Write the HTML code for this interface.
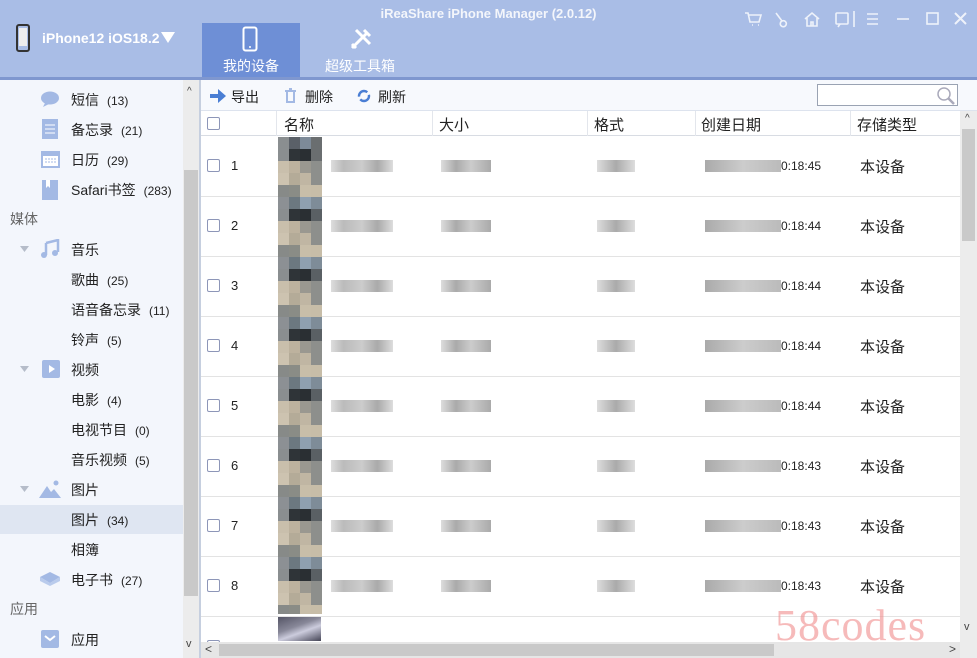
<!DOCTYPE html>
<html><head><meta charset="utf-8"><style>
*{margin:0;padding:0;box-sizing:border-box}
body{width:977px;height:658px;overflow:hidden;position:relative;background:#fff;font-family:"Liberation Sans","Noto Sans CJK SC",sans-serif;font-size:14px;color:#222}
.hdr{position:absolute;left:0;top:0;width:977px;height:78px;background:#a9bde6}
.hline{position:absolute;left:0;top:77px;width:977px;height:3px;background:#7f97cf}
.title{position:absolute;left:0;width:977px;top:6px;text-align:center;color:#f4f6fb;font-weight:bold;font-size:13px}
.dev{position:absolute;left:42px;top:30px;color:#fff;font-weight:bold;font-size:14px}
.tab{position:absolute;top:23px;width:98px;height:54px;text-align:center;color:#fff;font-size:14px}
.tab span{position:absolute;left:0;right:0;top:33px}
.sb{position:absolute;left:0;top:80px;width:183px;height:578px;background:#f3f6fc}
.it{position:absolute;font-size:14px;color:#222;white-space:nowrap}
.it small{font-size:12px;margin-left:8px}
.sec{position:absolute;left:10px;color:#666;font-size:14px}
.ico{position:absolute}
.vs{position:absolute;left:183px;top:80px;width:16px;height:578px;background:#ececec}
.vs .th{position:absolute;left:1px;top:90px;width:14px;height:426px;background:#c9c9c9}
.div{position:absolute;left:199px;top:80px;width:2px;height:578px;background:#c6cfdf}
.tb{position:absolute;left:201px;top:80px;width:776px;height:31px;background:#f7f9fd;border-bottom:1px solid #dde3ee}
.tb .b{position:absolute;top:7px;font-size:14px}
.srch{position:absolute;left:817px;top:84px;width:141px;height:22px;border:1px solid #9aa3b3;background:#fff}
.th2{position:absolute;left:201px;top:111px;width:759px;height:25px;border-bottom:1px solid #d8dce3;background:#fff}
.th2 .h{position:absolute;top:3px;font-size:15px}
.th2 i{position:absolute;top:0;width:1px;height:25px;background:#e3e6ec}
.cb{position:absolute;width:13px;height:13px;border:1.5px solid #8d96b8;border-radius:2px;background:#fff}
.row{position:absolute;left:201px;width:759px;height:60px;border-bottom:1px solid #e3e3e3}
.row .n{position:absolute;left:30px;top:21px;font-size:13px}
.row .st{position:absolute;left:659px;top:19px;font-size:15px}
.row .tm{position:absolute;left:580px;top:22px;font-size:12px}
.bl{position:absolute;height:12px}
.rs{position:absolute;left:960px;top:111px;width:17px;height:547px;background:#ececec}
.rs .th{position:absolute;left:2px;top:18px;width:13px;height:112px;background:#c9c9c9}
.hs{position:absolute;left:201px;top:642px;width:759px;height:16px;background:#e6e6e6}
.hs .th{position:absolute;left:18px;top:2px;width:555px;height:12px;background:#c9c9c9}
.thumb{position:absolute;left:278px;top:137px;width:44px;height:477px;overflow:hidden;display:grid;grid-template-columns:repeat(4,11px);grid-auto-rows:12px}
.wm{position:absolute;left:775px;top:600px;font-family:"Liberation Serif",serif;font-size:44px;color:rgba(240,140,140,.6);letter-spacing:1px}
</style></head><body>
<div class="hdr"></div><div class="hline"></div>
<div class="title">iReaShare iPhone Manager (2.0.12)</div>
<svg class="ico" style="left:16px;top:24px" width="14" height="28"><rect x="1" y="1" width="12" height="26" rx="2" fill="none" stroke="#333" stroke-width="2"/><rect x="3" y="4" width="8" height="18" fill="#eee"/></svg>
<div class="dev">iPhone12 iOS18.2</div>
<svg class="ico" style="left:161px;top:32px" width="14" height="11"><path d="M0 0H14L7 11Z" fill="#fff"/></svg>
<div class="tab" style="left:202px;background:#6e8fd6"><svg style="position:absolute;left:40px;top:3px" width="16" height="26"><rect x="1.5" y="1.5" width="13" height="23" rx="2" fill="none" stroke="#fff" stroke-width="2"/><circle cx="8" cy="21" r="1" fill="#fff"/></svg><span>我的设备</span></div>
<div class="tab" style="left:311px"><svg style="position:absolute;left:38px;top:4px" width="24" height="24" stroke="#fff" stroke-width="3" fill="none"><path d="M3 21L17 7M7 3L21 17M15 3l6 6M3 17l4 4"/></svg><span>超级工具箱</span></div>
<svg class="ico" style="left:744px;top:10px" width="230" height="18" stroke="#eef2fa" stroke-width="1.6" fill="none">
<path d="M1 3h3l2 9h9l2-7H5M8 15h1M14 15h1"/>
<path d="M32 3l6 8M38 11a3 3 0 1 0 4 4a3 3 0 0 0-4-4"/>
<path d="M61 9l7-6 7 6M63 8v8h10V8M67 16v-4h2v4"/>
<rect x="92" y="3" width="12" height="11" rx="1"/><path d="M96 14l-2 3"/><line x1="110" y1="1" x2="110" y2="17"/>
<path d="M123 4h11M123 9h11M123 14h11"/>
<path d="M153 9h12"/>
<rect x="183" y="3" width="11" height="11"/>
<path d="M211 3l11 11M222 3l-11 11" stroke-width="2"/>
</svg>
<div class="sb">
<div style="position:absolute;left:0;top:425px;width:183px;height:29px;background:#dfe6f2"></div>
</div>
<svg class="ico" style="left:40px;top:90px" width="20" height="18"><ellipse cx="10" cy="8" rx="9" ry="6.5" fill="#a3b9e4"/><path d="M5 13l-2 4 6-3z" fill="#a3b9e4"/></svg>
<svg class="ico" style="left:41px;top:118px" width="18" height="22"><rect x="1" y="1" width="16" height="20" fill="#a3b9e4"/><path d="M4 7h10M4 11h10M4 15h10" stroke="#fff"/></svg>
<svg class="ico" style="left:40px;top:149px" width="21" height="20"><rect x="1" y="2" width="19" height="17" fill="#a3b9e4"/><rect x="3" y="7" width="15" height="10" fill="#fff"/><path d="M5 10h11M5 13h11" stroke="#a3b9e4" stroke-dasharray="2 1"/></svg>
<svg class="ico" style="left:41px;top:179px" width="18" height="22"><rect x="1" y="1" width="16" height="20" fill="#a3b9e4"/><path d="M5 1v8l2-2 2 2V1" fill="#fff"/></svg>
<div class="it" style="left:71px;top:90px">短信<small>(13)</small></div>
<div class="it" style="left:71px;top:120px">备忘录<small>(21)</small></div>
<div class="it" style="left:71px;top:150px">日历<small>(29)</small></div>
<div class="it" style="left:71px;top:180px">Safari书签<small>(283)</small></div>
<div class="sec" style="top:209px">媒体</div>
<svg class="ico" style="left:20px;top:246px" width="9" height="6"><path d="M0 0h9L4.5 6z" fill="#b5bcc9"/></svg>
<svg class="ico" style="left:40px;top:239px" width="20" height="20"><path d="M6 4l12-3v12M6 4v12" stroke="#a3b9e4" stroke-width="2.5" fill="none"/><circle cx="4" cy="16" r="3" fill="#a3b9e4"/><circle cx="15" cy="14" r="3" fill="#a3b9e4"/></svg>
<div class="it" style="left:71px;top:240px">音乐</div>
<div class="it" style="left:71px;top:270px">歌曲<small>(25)</small></div>
<div class="it" style="left:71px;top:300px">语音备忘录<small>(11)</small></div>
<div class="it" style="left:71px;top:330px">铃声<small>(5)</small></div>
<svg class="ico" style="left:20px;top:366px" width="9" height="6"><path d="M0 0h9L4.5 6z" fill="#b5bcc9"/></svg>
<svg class="ico" style="left:42px;top:360px" width="18" height="18"><rect width="18" height="18" rx="2" fill="#a3b9e4"/><path d="M7 5l6 4-6 4z" fill="#fff"/></svg>
<div class="it" style="left:71px;top:360px">视频</div>
<div class="it" style="left:71px;top:390px">电影<small>(4)</small></div>
<div class="it" style="left:71px;top:420px">电视节目<small>(0)</small></div>
<div class="it" style="left:71px;top:450px">音乐视频<small>(5)</small></div>
<svg class="ico" style="left:20px;top:486px" width="9" height="6"><path d="M0 0h9L4.5 6z" fill="#b5bcc9"/></svg>
<svg class="ico" style="left:39px;top:480px" width="22" height="18"><path d="M0 18L8 6l4 6 3-3 7 9z" fill="#a3b9e4"/><circle cx="17" cy="3" r="2.5" fill="#a3b9e4"/></svg>
<div class="it" style="left:71px;top:480px">图片</div>
<div class="it" style="left:71px;top:510px">图片<small>(34)</small></div>
<div class="it" style="left:71px;top:540px">相簿</div>
<svg class="ico" style="left:39px;top:571px" width="22" height="16"><path d="M1 6l10-5 10 5-10 6z" fill="#a3b9e4"/><path d="M1 6v4l10 5 10-5V6l-10 6z" fill="#b9cbec"/></svg>
<div class="it" style="left:71px;top:570px">电子书<small>(27)</small></div>
<div class="sec" style="top:599px">应用</div>
<svg class="ico" style="left:41px;top:630px" width="18" height="18"><rect width="18" height="18" rx="2" fill="#a3b9e4"/><path d="M4 6l5 4 5-4" stroke="#fff" stroke-width="2" fill="none"/></svg>
<div class="it" style="left:71px;top:630px">应用</div>
<div class="vs"><div class="th"></div><div style="position:absolute;left:4px;top:6px;font-size:10px;color:#444">^</div><div style="position:absolute;left:3px;top:558px;font-size:11px;color:#444">v</div></div>
<div class="div"></div>
<div class="tb">
<svg style="position:absolute;left:9px;top:9px" width="16" height="14"><path d="M0 5h8V0l8 7-8 7V9H0z" fill="#4a7ed4"/></svg><div class="b" style="left:30px">导出</div>
<svg style="position:absolute;left:83px;top:8px" width="13" height="15"><path d="M1 3h11M3 3v11h7V3M5 1h3" stroke="#a3b9e4" stroke-width="2" fill="none"/></svg><div class="b" style="left:104px">删除</div>
<svg style="position:absolute;left:156px;top:9px" width="14" height="14"><circle cx="7" cy="7" r="5" stroke="#4a7ed4" stroke-width="2.4" fill="none" stroke-dasharray="12 3"/></svg><div class="b" style="left:177px">刷新</div>
</div>
<div class="srch"><svg style="position:absolute;right:2px;top:1px" width="19" height="19"><circle cx="8" cy="8" r="6" stroke="#aab" stroke-width="1.5" fill="none"/><path d="M12 12l6 6" stroke="#aab" stroke-width="2.5"/></svg></div>
<div class="th2">
<div class="cb" style="left:6px;top:6px"></div>
<i style="left:75px"></i><div class="h" style="left:83px">名称</div>
<i style="left:231px"></i><div class="h" style="left:238px">大小</div>
<i style="left:386px"></i><div class="h" style="left:393px">格式</div>
<i style="left:494px"></i><div class="h" style="left:500px">创建日期</div>
<i style="left:649px"></i><div class="h" style="left:656px">存储类型</div>
</div>
<div class="row" style="top:137px"><div class="cb" style="left:6px;top:22px"></div><div class="n">1</div><div class="bl" style="left:130px;top:23px;width:62px;background:linear-gradient(90deg,#ddd,#bbb 20%,#ccc 50%,#aaa 75%,#ddd)"></div><div class="bl" style="left:240px;top:23px;width:50px;background:linear-gradient(90deg,#ddd,#aaa 30%,#ccc 60%,#aaa)"></div><div class="bl" style="left:396px;top:23px;width:38px;background:linear-gradient(90deg,#ddd,#aaa,#ddd)"></div><div class="bl" style="left:504px;top:23px;width:76px;background:linear-gradient(90deg,#aaa,#ccc 50%,#bbb)"></div><div class="tm">0:18:45</div><div class="st">本设备</div></div>
<div class="row" style="top:197px"><div class="cb" style="left:6px;top:22px"></div><div class="n">2</div><div class="bl" style="left:130px;top:23px;width:62px;background:linear-gradient(90deg,#ddd,#bbb 20%,#ccc 50%,#aaa 75%,#ddd)"></div><div class="bl" style="left:240px;top:23px;width:50px;background:linear-gradient(90deg,#ddd,#aaa 30%,#ccc 60%,#aaa)"></div><div class="bl" style="left:396px;top:23px;width:38px;background:linear-gradient(90deg,#ddd,#aaa,#ddd)"></div><div class="bl" style="left:504px;top:23px;width:76px;background:linear-gradient(90deg,#aaa,#ccc 50%,#bbb)"></div><div class="tm">0:18:44</div><div class="st">本设备</div></div>
<div class="row" style="top:257px"><div class="cb" style="left:6px;top:22px"></div><div class="n">3</div><div class="bl" style="left:130px;top:23px;width:62px;background:linear-gradient(90deg,#ddd,#bbb 20%,#ccc 50%,#aaa 75%,#ddd)"></div><div class="bl" style="left:240px;top:23px;width:50px;background:linear-gradient(90deg,#ddd,#aaa 30%,#ccc 60%,#aaa)"></div><div class="bl" style="left:396px;top:23px;width:38px;background:linear-gradient(90deg,#ddd,#aaa,#ddd)"></div><div class="bl" style="left:504px;top:23px;width:76px;background:linear-gradient(90deg,#aaa,#ccc 50%,#bbb)"></div><div class="tm">0:18:44</div><div class="st">本设备</div></div>
<div class="row" style="top:317px"><div class="cb" style="left:6px;top:22px"></div><div class="n">4</div><div class="bl" style="left:130px;top:23px;width:62px;background:linear-gradient(90deg,#ddd,#bbb 20%,#ccc 50%,#aaa 75%,#ddd)"></div><div class="bl" style="left:240px;top:23px;width:50px;background:linear-gradient(90deg,#ddd,#aaa 30%,#ccc 60%,#aaa)"></div><div class="bl" style="left:396px;top:23px;width:38px;background:linear-gradient(90deg,#ddd,#aaa,#ddd)"></div><div class="bl" style="left:504px;top:23px;width:76px;background:linear-gradient(90deg,#aaa,#ccc 50%,#bbb)"></div><div class="tm">0:18:44</div><div class="st">本设备</div></div>
<div class="row" style="top:377px"><div class="cb" style="left:6px;top:22px"></div><div class="n">5</div><div class="bl" style="left:130px;top:23px;width:62px;background:linear-gradient(90deg,#ddd,#bbb 20%,#ccc 50%,#aaa 75%,#ddd)"></div><div class="bl" style="left:240px;top:23px;width:50px;background:linear-gradient(90deg,#ddd,#aaa 30%,#ccc 60%,#aaa)"></div><div class="bl" style="left:396px;top:23px;width:38px;background:linear-gradient(90deg,#ddd,#aaa,#ddd)"></div><div class="bl" style="left:504px;top:23px;width:76px;background:linear-gradient(90deg,#aaa,#ccc 50%,#bbb)"></div><div class="tm">0:18:44</div><div class="st">本设备</div></div>
<div class="row" style="top:437px"><div class="cb" style="left:6px;top:22px"></div><div class="n">6</div><div class="bl" style="left:130px;top:23px;width:62px;background:linear-gradient(90deg,#ddd,#bbb 20%,#ccc 50%,#aaa 75%,#ddd)"></div><div class="bl" style="left:240px;top:23px;width:50px;background:linear-gradient(90deg,#ddd,#aaa 30%,#ccc 60%,#aaa)"></div><div class="bl" style="left:396px;top:23px;width:38px;background:linear-gradient(90deg,#ddd,#aaa,#ddd)"></div><div class="bl" style="left:504px;top:23px;width:76px;background:linear-gradient(90deg,#aaa,#ccc 50%,#bbb)"></div><div class="tm">0:18:43</div><div class="st">本设备</div></div>
<div class="row" style="top:497px"><div class="cb" style="left:6px;top:22px"></div><div class="n">7</div><div class="bl" style="left:130px;top:23px;width:62px;background:linear-gradient(90deg,#ddd,#bbb 20%,#ccc 50%,#aaa 75%,#ddd)"></div><div class="bl" style="left:240px;top:23px;width:50px;background:linear-gradient(90deg,#ddd,#aaa 30%,#ccc 60%,#aaa)"></div><div class="bl" style="left:396px;top:23px;width:38px;background:linear-gradient(90deg,#ddd,#aaa,#ddd)"></div><div class="bl" style="left:504px;top:23px;width:76px;background:linear-gradient(90deg,#aaa,#ccc 50%,#bbb)"></div><div class="tm">0:18:43</div><div class="st">本设备</div></div>
<div class="row" style="top:557px"><div class="cb" style="left:6px;top:22px"></div><div class="n">8</div><div class="bl" style="left:130px;top:23px;width:62px;background:linear-gradient(90deg,#ddd,#bbb 20%,#ccc 50%,#aaa 75%,#ddd)"></div><div class="bl" style="left:240px;top:23px;width:50px;background:linear-gradient(90deg,#ddd,#aaa 30%,#ccc 60%,#aaa)"></div><div class="bl" style="left:396px;top:23px;width:38px;background:linear-gradient(90deg,#ddd,#aaa,#ddd)"></div><div class="bl" style="left:504px;top:23px;width:76px;background:linear-gradient(90deg,#aaa,#ccc 50%,#bbb)"></div><div class="tm">0:18:43</div><div class="st">本设备</div></div>
<div class="thumb">
<b style="background:#8a8e90"></b><b style="background:#5a6068"></b><b style="background:#7d8a98"></b><b style="background:#6a6e70"></b>
<b style="background:#8a8e90"></b><b style="background:#2f3438"></b><b style="background:#2a2f33"></b><b style="background:#6a6e70"></b>
<b style="background:#c9bfac"></b><b style="background:#bdb29e"></b><b style="background:#9a9890"></b><b style="background:#8d8f8c"></b>
<b style="background:#cdc3b0"></b><b style="background:#b4ab98"></b><b style="background:#c0b6a3"></b><b style="background:#8d8f8c"></b>
<b style="background:#878a88"></b><b style="background:#8a8c86"></b><b style="background:#c8bea9"></b><b style="background:#c7bda8"></b>
<b style="background:#8c9094"></b><b style="background:#6c7880"></b><b style="background:#8fa0b0"></b><b style="background:#7e8c98"></b>
<b style="background:#8a8e90"></b><b style="background:#2f3438"></b><b style="background:#2a2f33"></b><b style="background:#5a6064"></b>
<b style="background:#c9bfac"></b><b style="background:#bdb29e"></b><b style="background:#9a9890"></b><b style="background:#8d8f8c"></b>
<b style="background:#cdc3b0"></b><b style="background:#b4ab98"></b><b style="background:#c0b6a3"></b><b style="background:#8d8f8c"></b>
<b style="background:#878a88"></b><b style="background:#8a8c86"></b><b style="background:#c8bea9"></b><b style="background:#c7bda8"></b>
<b style="background:#8c9094"></b><b style="background:#6c7880"></b><b style="background:#8fa0b0"></b><b style="background:#7e8c98"></b>
<b style="background:#8a8e90"></b><b style="background:#2f3438"></b><b style="background:#2a2f33"></b><b style="background:#5a6064"></b>
<b style="background:#c9bfac"></b><b style="background:#bdb29e"></b><b style="background:#9a9890"></b><b style="background:#8d8f8c"></b>
<b style="background:#cdc3b0"></b><b style="background:#b4ab98"></b><b style="background:#c0b6a3"></b><b style="background:#8d8f8c"></b>
<b style="background:#878a88"></b><b style="background:#8a8c86"></b><b style="background:#c8bea9"></b><b style="background:#c7bda8"></b>
<b style="background:#8c9094"></b><b style="background:#6c7880"></b><b style="background:#8fa0b0"></b><b style="background:#7e8c98"></b>
<b style="background:#8a8e90"></b><b style="background:#2f3438"></b><b style="background:#2a2f33"></b><b style="background:#5a6064"></b>
<b style="background:#c9bfac"></b><b style="background:#bdb29e"></b><b style="background:#9a9890"></b><b style="background:#8d8f8c"></b>
<b style="background:#cdc3b0"></b><b style="background:#b4ab98"></b><b style="background:#c0b6a3"></b><b style="background:#8d8f8c"></b>
<b style="background:#878a88"></b><b style="background:#8a8c86"></b><b style="background:#c8bea9"></b><b style="background:#c7bda8"></b>
<b style="background:#8c9094"></b><b style="background:#6c7880"></b><b style="background:#8fa0b0"></b><b style="background:#7e8c98"></b>
<b style="background:#8a8e90"></b><b style="background:#2f3438"></b><b style="background:#2a2f33"></b><b style="background:#5a6064"></b>
<b style="background:#c9bfac"></b><b style="background:#bdb29e"></b><b style="background:#9a9890"></b><b style="background:#8d8f8c"></b>
<b style="background:#cdc3b0"></b><b style="background:#b4ab98"></b><b style="background:#c0b6a3"></b><b style="background:#8d8f8c"></b>
<b style="background:#878a88"></b><b style="background:#8a8c86"></b><b style="background:#c8bea9"></b><b style="background:#c7bda8"></b>
<b style="background:#8c9094"></b><b style="background:#6c7880"></b><b style="background:#8fa0b0"></b><b style="background:#7e8c98"></b>
<b style="background:#8a8e90"></b><b style="background:#2f3438"></b><b style="background:#2a2f33"></b><b style="background:#5a6064"></b>
<b style="background:#c9bfac"></b><b style="background:#bdb29e"></b><b style="background:#9a9890"></b><b style="background:#8d8f8c"></b>
<b style="background:#cdc3b0"></b><b style="background:#b4ab98"></b><b style="background:#c0b6a3"></b><b style="background:#8d8f8c"></b>
<b style="background:#878a88"></b><b style="background:#8a8c86"></b><b style="background:#c8bea9"></b><b style="background:#c7bda8"></b>
<b style="background:#8c9094"></b><b style="background:#6c7880"></b><b style="background:#8fa0b0"></b><b style="background:#7e8c98"></b>
<b style="background:#8a8e90"></b><b style="background:#2f3438"></b><b style="background:#2a2f33"></b><b style="background:#5a6064"></b>
<b style="background:#c9bfac"></b><b style="background:#bdb29e"></b><b style="background:#9a9890"></b><b style="background:#8d8f8c"></b>
<b style="background:#cdc3b0"></b><b style="background:#b4ab98"></b><b style="background:#c0b6a3"></b><b style="background:#8d8f8c"></b>
<b style="background:#878a88"></b><b style="background:#8a8c86"></b><b style="background:#c8bea9"></b><b style="background:#c7bda8"></b>
<b style="background:#8c9094"></b><b style="background:#6c7880"></b><b style="background:#8fa0b0"></b><b style="background:#7e8c98"></b>
<b style="background:#8a8e90"></b><b style="background:#2f3438"></b><b style="background:#2a2f33"></b><b style="background:#5a6064"></b>
<b style="background:#c9bfac"></b><b style="background:#bdb29e"></b><b style="background:#9a9890"></b><b style="background:#8d8f8c"></b>
<b style="background:#cdc3b0"></b><b style="background:#b4ab98"></b><b style="background:#c0b6a3"></b><b style="background:#8d8f8c"></b>
<b style="background:#878a88"></b><b style="background:#8a8c86"></b><b style="background:#c8bea9"></b><b style="background:#c7bda8"></b>
<b style="background:#8c9094"></b><b style="background:#6c7880"></b><b style="background:#8fa0b0"></b><b style="background:#7e8c98"></b>
<b style="background:#8a8e90"></b><b style="background:#2f3438"></b><b style="background:#2a2f33"></b><b style="background:#5a6064"></b>
<b style="background:#c9bfac"></b><b style="background:#bdb29e"></b><b style="background:#9a9890"></b><b style="background:#8d8f8c"></b>
<b style="background:#cdc3b0"></b><b style="background:#b4ab98"></b><b style="background:#c0b6a3"></b><b style="background:#8d8f8c"></b>
<b style="background:#878a88"></b><b style="background:#8a8c86"></b><b style="background:#c8bea9"></b><b style="background:#c7bda8"></b>
</div>
<div style="position:absolute;left:278px;top:617px;width:43px;height:24px;background:linear-gradient(160deg,#556,#889 40%,#ccd 60%,#445)"></div>
<div class="cb" style="left:207px;top:640px"></div>
<div class="rs"><div class="th"></div><div style="position:absolute;left:5px;top:2px;font-size:10px;color:#444">^</div><div style="position:absolute;left:4px;top:510px;font-size:11px;color:#444">v</div></div>
<div class="hs"><div class="th"></div><div style="position:absolute;left:4px;top:0;font-size:12px;color:#444">&lt;</div><div style="position:absolute;left:748px;top:0;font-size:12px;color:#444">&gt;</div></div>
<div class="wm">58codes</div>
</body></html>
